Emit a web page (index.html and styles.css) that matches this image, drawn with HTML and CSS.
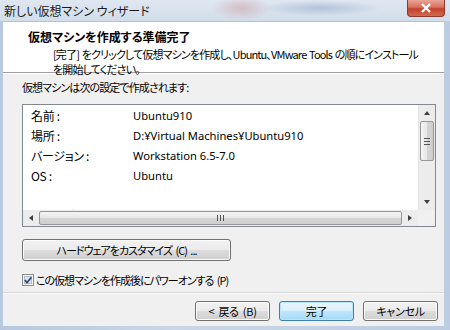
FILE: index.html
```html
<!DOCTYPE html>
<html lang="ja">
<head>
  <meta charset="UTF-8">
  <title>新しい仮想マシン ウィザード</title>
  <link rel="stylesheet" href="styles.css">
</head>
<body>
  <div class="window">
    <div class="titlebar">
      <span class="title">新しい仮想マシン ウィザード</span>
      <div class="close">
        <svg width="12" height="10" viewBox="0 0 12 10"><path d="M2 1 L10 9 M10 1 L2 9" stroke="#fff" stroke-width="2.4"/></svg>
      </div>
    </div>

    <div class="client">
      <div class="header">
        <h1>仮想マシンを作成する準備完了</h1>
        <p>[完了] をクリックして仮想マシンを作成し、Ubuntu、VMware Tools の順にインストール<br>を開始してください。</p>
      </div>

      <div class="body">
        <div class="lead">仮想マシンは次の設定で作成されます:</div>

        <div class="list">
          <div class="list-main">
            <div class="rows">
              <div class="row"><span class="key">名前 :</span><span>Ubuntu910</span></div>
              <div class="row"><span class="key">場所 :</span><span>D:¥Virtual Machines¥Ubuntu910</span></div>
              <div class="row"><span class="key">バージョン :</span><span>Workstation 6.5-7.0</span></div>
              <div class="row"><span class="key">OS :</span><span>Ubuntu</span></div>
              <div class="row"></div>
              <div class="row"><span class="key">ハードディスク :</span><span>20 GB</span></div>
            </div>
            <div class="vscroll">
              <div class="arrow up"></div>
              <div class="vthumb"><span class="grip-v"></span></div>
              <div class="vtrack"></div>
              <div class="arrow down"></div>
            </div>
          </div>
          <div class="list-bottom">
            <div class="hscroll">
              <div class="arrow left"></div>
              <div class="hthumb"><span class="grip-h"></span></div>
              <div class="arrow right"></div>
            </div>
            <div class="corner"></div>
          </div>
        </div>

        <button class="btn wide">ハードウェアをカスタマイズ (C) ...</button>

        <label class="check">
          <svg width="12" height="12" viewBox="0 0 12 12">
            <rect x="0.5" y="0.5" width="11" height="11" fill="#f4f4f4" stroke="#8e8f8f"/>
            <rect x="2.5" y="2.5" width="7" height="7" fill="#e2e6ea" stroke="#b8bec4"/>
            <path d="M2.8 6 L5 8.6 L9.4 3.2" fill="none" stroke="#2f4a7a" stroke-width="1.7"/>
          </svg>
          <span>この仮想マシンを作成後にパワーオンする (P)</span>
        </label>
      </div>

      <div class="footer">
        <button class="btn">&lt; 戻る (B)</button>
        <button class="btn default">完了</button>
        <button class="btn">キャンセル</button>
      </div>
    </div>
  </div>
</body>
</html>
```

FILE: styles.css
```css
body {
  margin: 0;
  font-family: "Noto Sans", "Noto Sans CJK JP", sans-serif;
  font-size: 12px;
  color: #000;
}
.window {
  width: 450px;
  height: 330px;
  background: linear-gradient(90deg, #b7c9df 0%, #c9d7e8 40%, #bccde2 100%);
  display: flex;
  flex-direction: column;
  overflow: hidden;
}
.titlebar {
  height: 21px;
  display: flex;
  align-items: flex-start;
  background:
    radial-gradient(ellipse 30px 12px at 242px 8px, rgba(200, 120, 120, 0.35), transparent),
    radial-gradient(ellipse 60px 8px at 320px 8px, rgba(90, 120, 170, 0.3), transparent),
    linear-gradient(#dfe7f1, #d2ddea);
}
.title {
  padding: 2px 0 0 4px;
  font-family: "Noto Sans CJK JP", sans-serif;
  font-feature-settings: "palt";
  color: #1a1a1a;
}
.close {
  margin-left: auto;
  margin-right: 5px;
  width: 38px;
  height: 17px;
  border: 1px solid #8b3a32;
  border-top: none;
  border-radius: 0 0 4px 4px;
  box-sizing: border-box;
  background: linear-gradient(#e8a493 0%, #d9705c 45%, #c4412c 55%, #d06a4f 100%);
  display: flex;
  align-items: center;
  justify-content: center;
}
.client {
  flex: 1;
  margin: 0 6px 4px 3px;
  background: #f0f0f0;
  display: flex;
  flex-direction: column;
  border-top: 1px solid #b4c0ce;
}
.header {
  background: #fff;
  height: 50px;
  border-bottom: 1px solid #a0a0a0;
  box-shadow: 0 1px 0 #fff;
  font-family: "Noto Sans CJK JP", sans-serif;
  font-feature-settings: "palt";
}
.header h1 {
  margin: 0;
  padding: 7px 0 0 25px;
  font-size: 12px;
  line-height: 16px;
  font-weight: bold;
}
.header p {
  margin: 0;
  padding: 2px 0 0 50px;
  font-size: 11px;
  letter-spacing: -0.85px;
  word-spacing: 1px;
  line-height: 15px;
  white-space: nowrap;
}
.body {
  flex: 1;
  padding: 6px 0 0 19px;
}
.lead {
  font-family: "Noto Sans CJK JP", sans-serif;
  font-feature-settings: "palt";
  font-size: 11px;
  letter-spacing: -0.9px;
  line-height: 16px;
}
.list {
  margin-top: 9px;
  width: 414px;
  height: 123px;
  box-sizing: border-box;
  border: 1px solid #828790;
  background: #fff;
  display: flex;
  flex-direction: column;
}
.list-main {
  flex: 1;
  display: flex;
  overflow: hidden;
}
.rows {
  flex: 1;
  padding: 1px 0 0 8px;
  overflow: hidden;
}
.row {
  height: 20px;
  line-height: 20px;
  display: flex;
  white-space: nowrap;
  font-size: 11.2px;
}
.key {
  width: 102px;
  font-family: "Noto Sans CJK JP", sans-serif;
  font-feature-settings: "palt";
  font-size: 12px;
  letter-spacing: -0.3px;
}
.vscroll {
  width: 16px;
  background: #ececec;
  display: flex;
  flex-direction: column;
  border-left: 1px solid #e3e3e3;
}
.vthumb {
  height: 40px;
  margin: 0 1px;
  box-sizing: border-box;
  border: 1px solid #979797;
  border-radius: 2px;
  background: linear-gradient(90deg, #f4f4f4, #e6e6e6 50%, #d4d4d4 50%, #cfcfcf);
  display: flex;
  align-items: center;
  justify-content: center;
}
.vtrack {
  flex: 1;
}
.grip-v {
  width: 6px;
  height: 5px;
  border-top: 1px solid #555;
  border-bottom: 1px solid #555;
  position: relative;
}
.grip-v::after {
  content: "";
  position: absolute;
  left: 0;
  right: 0;
  top: 2px;
  border-top: 1px solid #555;
}
.list-bottom {
  height: 16px;
  display: flex;
}
.hscroll {
  flex: 1;
  background: #ececec;
  display: flex;
  align-items: stretch;
}
.hthumb {
  flex: 1;
  margin: 1px 0;
  box-sizing: border-box;
  border: 1px solid #979797;
  border-radius: 2px;
  background: linear-gradient(#f4f4f4, #e6e6e6 50%, #d4d4d4 50%, #cfcfcf);
  display: flex;
  align-items: center;
  justify-content: center;
}
.grip-h {
  width: 5px;
  height: 6px;
  border-left: 1px solid #555;
  border-right: 1px solid #555;
  position: relative;
}
.grip-h::after {
  content: "";
  position: absolute;
  top: 0;
  bottom: 0;
  left: 2px;
  border-left: 1px solid #555;
}
.corner {
  width: 17px;
  background: #f0f0f0;
}
.arrow {
  width: 16px;
  height: 16px;
  flex: none;
  display: flex;
  align-items: center;
  justify-content: center;
}
.arrow::before {
  content: "";
  border: 3px solid transparent;
}
.arrow.up::before {
  border-bottom: 4px solid #404040;
  border-top: 0;
}
.arrow.down::before {
  border-top: 4px solid #404040;
  border-bottom: 0;
}
.arrow.left::before {
  border-right: 4px solid #404040;
  border-left: 0;
}
.arrow.right::before {
  border-left: 4px solid #404040;
  border-right: 0;
}
.btn {
  font-family: "Noto Sans CJK JP", sans-serif;
  font-feature-settings: "palt";
  font-size: 11px;
  letter-spacing: -0.3px;
  color: #000;
  height: 22px;
  padding: 0;
  border: 1px solid #707070;
  border-radius: 3px;
  box-shadow: inset 0 0 0 1px #fcfcfc;
  background: linear-gradient(#f2f2f2, #ebebeb 50%, #dddddd 50%, #cfcfcf);
}
.btn.wide {
  display: block;
  margin-top: 12px;
  width: 209px;
  letter-spacing: -1px;
  word-spacing: 2px;
}
.btn.default {
  border-color: #3c7fb1;
  box-shadow: inset 0 0 0 1px #b9e3fb;
  background: linear-gradient(#eaf6fd, #d9f0fc 50%, #bee6fd 50%, #a7d9f5);
}
.check {
  margin-top: 12px;
  display: flex;
  align-items: center;
  gap: 2px;
  font-family: "Noto Sans CJK JP", sans-serif;
  font-feature-settings: "palt";
  font-size: 11px;
  letter-spacing: -1px;
  word-spacing: 2px;
  line-height: 14px;
}
.footer {
  height: 34px;
  border-top: 1px solid #d8d8d8;
  box-shadow: inset 0 1px 0 #fff;
  display: flex;
  justify-content: flex-end;
  align-items: flex-start;
  gap: 9px;
  padding: 8px 6px 0 0;
  box-sizing: border-box;
}
.footer .btn {
  width: 75px;
  height: 20px;
  word-spacing: 2px;
}
```
